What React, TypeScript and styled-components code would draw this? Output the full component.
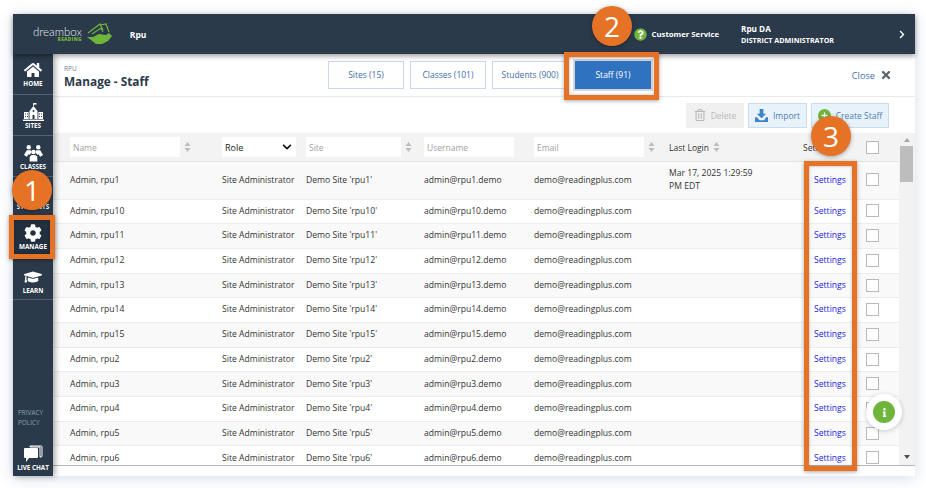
import * as React from 'react';
import styled, { createGlobalStyle } from 'styled-components';
import {
  FaHome,
  FaCog,
  FaGraduationCap,
  FaQuestionCircle,
  FaChevronRight,
  FaChevronDown,
  FaTimes,
  FaRegTrashAlt,
  FaInfo,
  FaPlus,
} from 'react-icons/fa';

const GlobalStyle = createGlobalStyle`
  html, body {
    margin: 0;
    padding: 0;
    background: #fff;
    font-family: "Open Sans", "Liberation Sans", sans-serif;
  }
  #root {
    width: 926px;
    height: 488px;
    overflow: hidden;
    position: relative;
  }
`;

const Frame = styled.div`
  margin: 14px 0 0 13px;
  width: 902px;
  height: 462px;
  display: flex;
  flex-direction: column;
  background: #fff;
  box-shadow: 0 2px 14px rgba(70, 100, 150, 0.22);
`;

const TopBar = styled.header`
  height: 40px;
  flex: none;
  display: flex;
  align-items: center;
  background: #2b3a4b;
  color: #fff;
  position: relative;
  z-index: 3;
  box-shadow: 0 2px 5px rgba(0, 0, 0, 0.4);
`;

const Logo = styled.div`
  display: flex;
  align-items: center;
  margin-left: 20px;
  gap: 4px;
`;

const LogoWords = styled.div`
  display: flex;
  flex-direction: column;
  align-items: flex-end;
  line-height: 1;
`;

const LogoName = styled.span`
  font-family: "Lato", sans-serif;
  font-weight: 300;
  font-size: 11.5px;
  color: #e8ebee;
`;

const LogoSub = styled.span`
  font-weight: 800;
  font-size: 4.8px;
  letter-spacing: 0.3px;
  color: #6fb53c;
`;

const OrgName = styled.span`
  margin-left: 18px;
  font-size: 8.5px;
  font-weight: 700;
`;

const TopRight = styled.div`
  margin-left: auto;
  display: flex;
  align-items: center;
  color: #fff;
`;

const HelpIcon = styled(FaQuestionCircle)`
  width: 13px;
  height: 13px;
  color: #6fb53c;
  background: radial-gradient(#fff 50%, transparent 55%);
  border-radius: 50%;
`;

const ServiceLabel = styled.span`
  margin-left: 5px;
  font-size: 7.75px;
  font-weight: 700;
`;

const UserBox = styled.div`
  margin-left: 22px;
  width: 157px;
  display: flex;
  flex-direction: column;
  gap: 1px;
  line-height: 10px;
`;

const UserName = styled.span`
  font-size: 8.2px;
  font-weight: 700;
`;

const UserRole = styled.span`
  font-size: 7.15px;
  font-weight: 700;
`;

const TopChevron = styled(FaChevronRight)`
  width: 8px;
  height: 9px;
  margin-right: 9px;
`;

const Body = styled.div`
  flex: 1;
  min-height: 0;
  display: flex;
`;

const SideBar = styled.nav`
  width: 40px;
  flex: none;
  display: flex;
  flex-direction: column;
  background: #2b3a4b;
  position: relative;
  z-index: 2;
  box-shadow: 2px 0 6px rgba(0, 0, 0, 0.35);
`;

const NavItem = styled.div<{ $active?: boolean; $bottom?: number }>`
  height: 41px;
  box-sizing: border-box;
  flex: none;
  display: flex;
  flex-direction: column;
  align-items: center;
  justify-content: flex-end;
  padding-bottom: ${(p) => p.$bottom ?? 7}px;
  gap: 1px;
  border-bottom: 1px solid #52606f;
  background: ${(p) => (p.$active ? '#222f3e' : 'transparent')};
  color: #fff;
  svg {
    width: 18px;
    height: 18px;
  }
`;

const NavLabel = styled.span`
  font-size: 6.3px;
  line-height: 7px;
  font-weight: 700;
`;

const SideSpacer = styled.div`
  flex: 1;
`;

const Privacy = styled.div`
  padding-left: 5px;
  margin-bottom: 17px;
  font-size: 6.4px;
  line-height: 10px;
  color: #8aa0b4;
`;

const ChatItem = styled.div`
  display: flex;
  flex-direction: column;
  align-items: center;
  gap: 1px;
  padding-bottom: 5px;
  color: #fff;
`;

const Main = styled.main`
  flex: 1;
  min-width: 0;
  display: flex;
  flex-direction: column;
`;

const PageHead = styled.div`
  height: 43px;
  flex: none;
  box-sizing: border-box;
  border-bottom: 1px solid #e9eaec;
  display: flex;
  align-items: center;
  padding: 0 23px 0 11px;
`;

const TitleBox = styled.div`
  width: 264px;
  display: flex;
  flex-direction: column;
  margin-top: 3px;
`;

const Crumb = styled.span`
  font-size: 6.5px;
  line-height: 8px;
  color: #6d7f93;
`;

const PageTitle = styled.h1`
  margin: 0;
  font-size: 11.8px;
  line-height: 16px;
  font-weight: 700;
  color: #2b3a4b;
`;

const Tabs = styled.div`
  display: flex;
  gap: 6px;
  margin-top: -1px;
`;

const Tab = styled.div<{ $active?: boolean }>`
  width: 76px;
  height: 28px;
  box-sizing: border-box;
  display: flex;
  align-items: center;
  justify-content: center;
  font-size: 8.5px;
  border: 1px solid ${(p) => (p.$active ? '#2f72c0' : '#c9d8ea')};
  background: ${(p) => (p.$active ? '#2f72c0' : '#fff')};
  color: ${(p) => (p.$active ? '#fff' : '#3f6ea8')};
  ${(p) => (p.$active ? 'margin-left: 1px; outline: 2px solid #d3d5d8; outline-offset: 0;' : '')}
`;

const CloseLink = styled.div`
  margin-left: auto;
  display: flex;
  align-items: center;
  gap: 5px;
  font-size: 9.2px;
  color: #3f6ea8;
  svg {
    width: 12px;
    height: 12px;
    color: #5a6570;
  }
`;

const Toolbar = styled.div`
  height: 36px;
  flex: none;
  display: flex;
  align-items: center;
  justify-content: flex-end;
  gap: 4px;
  padding-right: 26px;
`;

const ToolButton = styled.div<{ $disabled?: boolean; $width: number }>`
  width: ${(p) => p.$width}px;
  height: 25px;
  box-sizing: border-box;
  display: flex;
  align-items: center;
  justify-content: center;
  gap: 5px;
  font-size: 8.5px;
  border: 1px solid ${(p) => (p.$disabled ? '#f0f0f0' : '#c9dcf0')};
  background: ${(p) => (p.$disabled ? '#f0f0f0' : '#e8f2fa')};
  color: ${(p) => (p.$disabled ? '#b9b9b9' : '#4f7fb5')};
  svg {
    flex: none;
  }
`;

const PlusBadge = styled.span`
  width: 13px;
  height: 13px;
  border-radius: 50%;
  background: #6fb53c;
  color: #fff;
  display: flex;
  align-items: center;
  justify-content: center;
  svg {
    width: 7px;
    height: 7px;
  }
`;

const TableArea = styled.div`
  flex: 1;
  min-height: 0;
  display: flex;
  border-bottom: 1px solid #b5b8bb;
  margin-bottom: 10px;
  overflow: hidden;
`;

const TableBox = styled.div`
  flex: 1;
  min-width: 0;
  display: flex;
  flex-direction: column;
  overflow: hidden;
`;

const columns = '152px 84px 118px 110px 135px 134px 63px 33px';

const HeadRow = styled.div`
  height: 29px;
  flex: none;
  box-sizing: border-box;
  padding-left: 17px;
  display: grid;
  grid-template-columns: ${columns};
  align-items: center;
  background: #f3f3f3;
  border-bottom: 1px solid #e3e3e3;
  font-size: 8.5px;
  color: #333;
`;

const HeadCell = styled.div`
  display: flex;
  align-items: center;
  gap: 3px;
`;

const FilterBox = styled.div<{ $width: number }>`
  width: ${(p) => p.$width}px;
  height: 20px;
  box-sizing: border-box;
  padding-left: 3px;
  background: #fff;
  display: flex;
  align-items: center;
  color: #a2a2a2;
  font-size: 8.5px;
`;

const RoleBox = styled(FilterBox)`
  color: #222;
  justify-content: space-between;
  padding-right: 4px;
  font-size: 9px;
  svg {
    width: 10px;
    height: 10px;
    color: #111;
  }
`;

const SortMark = styled.svg`
  width: 7px;
  height: 10px;
  margin-left: 1px;
  color: #bdbdbd;
`;

const Row = styled.div<{ $even: boolean; $tall?: boolean }>`
  height: ${(p) => (p.$tall ? '37.6px' : '24.7px')};
  flex: none;
  box-sizing: border-box;
  padding: 0 0 1px 17px;
  display: grid;
  grid-template-columns: ${columns};
  align-items: center;
  background: ${(p) => (p.$even ? '#f9f9f9' : '#fff')};
  border-bottom: 1px solid #ececec;
  font-size: 8.6px;
  line-height: 12.5px;
  color: #333;
`;

const SettingsLink = styled.a`
  margin-left: 11px;
  color: #1a1ae0;
`;

const Check = styled.span`
  display: block;
  width: 13px;
  height: 13px;
  box-sizing: border-box;
  border: 1px solid #b9b9b9;
  background: #fff;
`;

const ScrollTrack = styled.div`
  width: 16px;
  flex: none;
  display: flex;
  flex-direction: column;
  align-items: center;
  background: #f2f2f2;
  padding: 5px 0 6px;
  box-sizing: border-box;
`;

const ScrollArrow = styled.span<{ $up?: boolean }>`
  width: 0;
  height: 0;
  border-left: 3.5px solid transparent;
  border-right: 3.5px solid transparent;
  ${(p) => (p.$up ? 'border-bottom: 4px solid #a5a5a5;' : 'border-top: 4px solid #505050;')}
`;

const ScrollThumb = styled.div`
  width: 13px;
  height: 36px;
  margin-top: 4px;
  margin-bottom: auto;
  margin-left: -1px;
  background: #bdbdbd;
`;

const Numbered = styled.div<{ $left: number; $top: number }>`
  position: absolute;
  left: ${(p) => p.$left}px;
  top: ${(p) => p.$top}px;
  width: 40px;
  height: 40px;
  border-radius: 50%;
  background: #e57225;
  color: #fff;
  font-family: "Open Sans", sans-serif;
  font-size: 28px;
  line-height: 40px;
  text-align: center;
  z-index: 10;
  box-shadow: 0 1px 4px rgba(0, 0, 0, 0.35);
`;

const Callout = styled.div<{ $left: number; $top: number; $w: number; $h: number }>`
  position: absolute;
  left: ${(p) => p.$left}px;
  top: ${(p) => p.$top}px;
  width: ${(p) => p.$w}px;
  height: ${(p) => p.$h}px;
  box-sizing: border-box;
  border: 5px solid #e57225;
  z-index: 9;
  box-shadow: 0 1px 4px rgba(0, 0, 0, 0.35), inset 0 0 3px rgba(0, 0, 0, 0.3);
`;

const InfoFab = styled.div`
  position: absolute;
  left: 866px;
  top: 394px;
  width: 36px;
  height: 36px;
  border-radius: 50%;
  background: #fff;
  box-shadow: 0 1px 5px rgba(0, 0, 0, 0.2);
  display: flex;
  align-items: center;
  justify-content: center;
  z-index: 8;
`;

const InfoDot = styled.span`
  width: 22px;
  height: 22px;
  border-radius: 50%;
  background: #6fb53c;
  color: #fff;
  display: flex;
  align-items: center;
  justify-content: center;
  svg {
    width: 9px;
    height: 9px;
  }
`;

const Sort = () => (
  <SortMark viewBox="0 0 7 10">
    <path d="M3.5 0L6.5 4H.5z M3.5 10L.5 6h6z" fill="currentColor" />
  </SortMark>
);

const LogoMark = () => (
  <svg width="26" height="22" viewBox="0 0 26 22">
    <path d="M1 14l6 0 6-3 7 1 3-2 3 3-4 5-6 3-6 0-5-4z" fill="#6fb53c" />
    <path d="M2 10L14 1l3 6" fill="none" stroke="#6fb53c" strokeWidth="1.3" />
    <path d="M6 11l9-6 2 4" fill="none" stroke="#6fb53c" strokeWidth="1.1" />
    <path d="M14 2l6-1 3 8" fill="none" stroke="#6fb53c" strokeWidth="1.2" />
  </svg>
);

const SchoolIcon = () => (
  <svg viewBox="0 0 21 18" style={{ width: 21, height: 18 }}>
    <path d="M10.5 0v3" stroke="currentColor" strokeWidth="0.8" />
    <path d="M10.5 0h3v1.6h-3z" fill="currentColor" />
    <path d="M6.5 8l4-5 4 5v8h-8z" fill="currentColor" />
    <path d="M1 9h4.6v7H1zM15.4 9H20v7h-4.6z" fill="currentColor" />
    <path d="M0 16.6h21V18H0z" fill="currentColor" />
    <path
      d="M2 10.5h1v1H2zM4 10.5h1v1H4zM2 13h1v1H2zM4 13h1v1H4zM16 10.5h1v1h-1zM18 10.5h1v1h-1zM16 13h1v1h-1zM18 13h1v1h-1zM9.5 12h2v4h-2z"
      fill="#2b3a4b"
    />
    <circle cx="10.5" cy="8" r="1" fill="#2b3a4b" />
  </svg>
);

const ClassesIcon = () => (
  <svg viewBox="0 0 22 18" style={{ width: 21, height: 18 }}>
    <circle cx="6" cy="3" r="2.3" fill="currentColor" />
    <circle cx="16" cy="3" r="2.3" fill="currentColor" />
    <circle cx="11" cy="8" r="2.4" fill="currentColor" />
    <path d="M1 11l3-5h4l1 2-2 3-1-1-2 3zM21 11l-3-5h-4l-1 2 2 3 1-1 2 3z" fill="currentColor" />
    <path d="M7 18v-5l2-2h4l2 2v5z" fill="currentColor" />
  </svg>
);

const ChatIcon = () => (
  <svg width="20" height="18" viewBox="0 0 20 18">
    <path d="M7 1h11a1 1 0 0 1 1 1v9a1 1 0 0 1-1 1h-1V2H7z" fill="none" stroke="currentColor" strokeWidth="1" />
    <path d="M2 3h12a1 1 0 0 1 1 1v8a1 1 0 0 1-1 1H6l-3 4v-4H2a1 1 0 0 1-1-1V4a1 1 0 0 1 1-1z" fill="currentColor" />
  </svg>
);

const ImportIcon = () => (
  <svg width="13" height="13" viewBox="0 0 14 14">
    <path d="M5 0h4v5h3L7 10 2 5h3z" fill="#3f83c9" />
    <path d="M0 9h2l3 3h5l2-3h2v5H0z" fill="#3f83c9" />
  </svg>
);

const names = ['1', '10', '11', '12', '13', '14', '15', '2', '3', '4', '5', '6'];

function App() {
  return (
    <>
      <GlobalStyle />
      <Frame>
        <TopBar>
          <Logo>
            <LogoWords>
              <LogoName>dreambox</LogoName>
              <LogoSub>READING</LogoSub>
            </LogoWords>
            <LogoMark />
          </Logo>
          <OrgName>Rpu</OrgName>
          <TopRight>
            <HelpIcon />
            <ServiceLabel>Customer Service</ServiceLabel>
            <UserBox>
              <UserName>Rpu DA</UserName>
              <UserRole>DISTRICT ADMINISTRATOR</UserRole>
            </UserBox>
            <TopChevron />
          </TopRight>
        </TopBar>
        <Body>
          <SideBar>
            <NavItem>
              <FaHome />
              <NavLabel>HOME</NavLabel>
            </NavItem>
            <NavItem $bottom={6}>
              <SchoolIcon />
              <NavLabel>SITES</NavLabel>
            </NavItem>
            <NavItem $bottom={6}>
              <ClassesIcon />
              <NavLabel>CLASSES</NavLabel>
            </NavItem>
            <NavItem>
              <NavLabel>STUDENTS</NavLabel>
            </NavItem>
            <NavItem $active $bottom={8}>
              <FaCog />
              <NavLabel>MANAGE</NavLabel>
            </NavItem>
            <NavItem $bottom={5}>
              <FaGraduationCap />
              <NavLabel>LEARN</NavLabel>
            </NavItem>
            <SideSpacer />
            <Privacy>
              PRIVACY
              <br />
              POLICY
            </Privacy>
            <ChatItem>
              <ChatIcon />
              <NavLabel>LIVE CHAT</NavLabel>
            </ChatItem>
          </SideBar>
          <Main>
            <PageHead>
              <TitleBox>
                <Crumb>RPU</Crumb>
                <PageTitle>Manage - Staff</PageTitle>
              </TitleBox>
              <Tabs>
                <Tab>Sites (15)</Tab>
                <Tab>Classes (101)</Tab>
                <Tab>Students (900)</Tab>
                <Tab $active>Staff (91)</Tab>
              </Tabs>
              <CloseLink>
                Close <FaTimes />
              </CloseLink>
            </PageHead>
            <Toolbar>
              <ToolButton $disabled $width={58}>
                <FaRegTrashAlt size={12} />
                Delete
              </ToolButton>
              <ToolButton $width={59}>
                <ImportIcon />
                Import
              </ToolButton>
              <ToolButton $width={78}>
                <PlusBadge>
                  <FaPlus />
                </PlusBadge>
                Create Staff
              </ToolButton>
            </Toolbar>
            <TableArea>
              <TableBox>
                <HeadRow>
                  <HeadCell>
                    <FilterBox $width={110}>Name</FilterBox>
                    <Sort />
                  </HeadCell>
                  <HeadCell>
                    <RoleBox $width={74}>
                      Role
                      <FaChevronDown />
                    </RoleBox>
                  </HeadCell>
                  <HeadCell>
                    <FilterBox $width={95}>Site</FilterBox>
                    <Sort />
                  </HeadCell>
                  <HeadCell>
                    <FilterBox $width={90}>Username</FilterBox>
                  </HeadCell>
                  <HeadCell>
                    <FilterBox $width={110}>Email</FilterBox>
                    <Sort />
                  </HeadCell>
                  <HeadCell>
                    Last Login
                    <Sort />
                  </HeadCell>
                  <HeadCell>Settings</HeadCell>
                  <HeadCell>
                    <Check />
                  </HeadCell>
                </HeadRow>
                {names.map((n, i) => (
                  <Row key={n} $even={i % 2 === 0} $tall={i === 0}>
                    <div>Admin, rpu{n}</div>
                    <div>Site Administrator</div>
                    <div>Demo Site 'rpu{n}'</div>
                    <div>admin@rpu{n}.demo</div>
                    <div>demo@readingplus.com</div>
                    <div>
                      {i === 0 ? (
                        <>
                          Mar 17, 2025 1:29:59
                          <br />
                          PM EDT
                        </>
                      ) : null}
                    </div>
                    <SettingsLink>Settings</SettingsLink>
                    <Check />
                  </Row>
                ))}
              </TableBox>
              <ScrollTrack>
                <ScrollArrow $up />
                <ScrollThumb />
                <ScrollArrow />
              </ScrollTrack>
            </TableArea>
          </Main>
        </Body>
      </Frame>
      <Callout $left={9} $top={215} $w={46} $h={44} />
      <Callout $left={564} $top={52} $w={95} $h={48} />
      <Callout $left={804} $top={161} $w={53} $h={310} />
      <Numbered $left={12} $top={170}>1</Numbered>
      <Numbered $left={592} $top={6}>2</Numbered>
      <Numbered $left={811} $top={116}>3</Numbered>
      <InfoFab>
        <InfoDot>
          <FaInfo />
        </InfoDot>
      </InfoFab>
    </>
  );
}

export default App;
